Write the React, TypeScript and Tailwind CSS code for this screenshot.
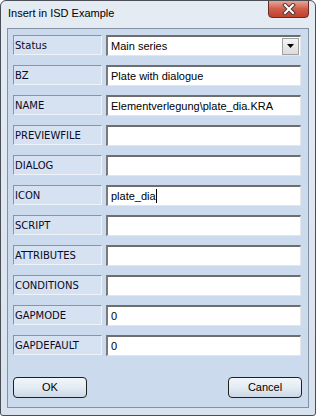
import React from 'react';

const rows: { label: string; value: string; caret?: boolean }[] = [
  { label: 'BZ', value: 'Plate with dialogue' },
  { label: 'NAME', value: 'Elementverlegung\\plate_dia.KRA' },
  { label: 'PREVIEWFILE', value: '' },
  { label: 'DIALOG', value: '' },
  { label: 'ICON', value: 'plate_dia', caret: true },
  { label: 'SCRIPT', value: '' },
  { label: 'ATTRIBUTES', value: '' },
  { label: 'CONDITIONS', value: '' },
  { label: 'GAPMODE', value: '0' },
  { label: 'GAPDEFAULT', value: '0' },
];

function Label({ text }: { text: string }) {
  return (
    <div className="w-[89px] h-[20px] shrink-0 flex items-center pl-[1px] bg-[#d6e2f1] border-t border-l border-t-[#8e949c] border-l-[#8e949c] border-r border-b border-r-[#eef3f9] border-b-[#eef3f9] font-['DejaVu_Sans',sans-serif] text-[10px] text-[#0a0a28]">
      {text}
    </div>
  );
}

function Field({ value, caret }: { value: string; caret?: boolean }) {
  return (
    <div className="w-[195px] h-[21px] ml-[4px] flex items-center bg-white border-t-2 border-l-2 border-t-[#6e6e6e] border-l-[#7a7a7a] border-r border-b border-r-[#e6e6e6] border-b-[#e6e6e6] pl-[3px] font-['Liberation_Sans',sans-serif] text-[11px] text-black">
      {value}
      {caret && <span className="w-px h-[14px] bg-black" />}
    </div>
  );
}

function Button({ text }: { text: string }) {
  return (
    <button className="w-[74px] h-[21px] rounded-[4px] border border-[#1f1f1f] bg-gradient-to-b from-[#f3f6fa] via-[#e3ebf4] to-[#cdd8e6] font-['Liberation_Sans',sans-serif] text-[11px] text-black flex items-center justify-center">
      {text}
    </button>
  );
}

export default function App() {
  return (
    <div className="w-[316px] h-[416px] flex flex-col bg-gradient-to-b from-[#e4ebf3] to-[#d8e2ee] border border-[#4a4f57] rounded-t-[6px] rounded-b-[3px] overflow-hidden">
      {/* title bar */}
      <div className="h-[27px] shrink-0 flex items-start">
        <div className="flex-1 pl-[7px] pt-[7px] font-['Liberation_Sans',sans-serif] text-[11px] text-black leading-none">
          Insert in ISD Example
        </div>
        <div className="w-[41px] h-[18px] mr-[6px] mt-[-1px] rounded-b-[4px] border border-[#6b2b25] bg-gradient-to-b from-[#e8a596] via-[#cf5d4a] to-[#c0402d] flex items-center justify-center">
          <svg width="14" height="12" viewBox="0 0 14 12">
            <path d="M3 2 L11 10 M11 2 L3 10" stroke="#4a3a3a" strokeWidth="4" strokeLinecap="square" />
            <path d="M3 2 L11 10 M11 2 L3 10" stroke="#ffffff" strokeWidth="2" strokeLinecap="square" />
          </svg>
        </div>
      </div>

      {/* client area */}
      <div className="mx-[6px] mb-[7px] flex-1 flex flex-col border border-[#8391a3] bg-[#cbdaed] pt-[6px] pl-[5px] pr-[6px]">
        <div className="flex flex-col gap-[9px]">
          <div className="flex items-start">
            <Label text="Status" />
            <div className="w-[195px] h-[21px] ml-[4px] flex items-center justify-between bg-white border-t-2 border-l-2 border-t-[#6e6e6e] border-l-[#7a7a7a] border-r border-b border-r-[#e6e6e6] border-b-[#e6e6e6] pl-[3px] font-['Liberation_Sans',sans-serif] text-[11px] text-black">
              Main series
              <div className="w-[17px] h-[17px] mr-[1px] flex items-center justify-center bg-gradient-to-b from-[#f4f4f4] to-[#dcdcdc] border border-[#a0a0a0]">
                <svg width="7" height="4" viewBox="0 0 7 4">
                  <path d="M0 0 H7 L3.5 4 Z" fill="#000" />
                </svg>
              </div>
            </div>
          </div>
          {rows.map((r) => (
            <div key={r.label} className="flex items-start">
              <Label text={r.label} />
              <Field value={r.value} caret={r.caret} />
            </div>
          ))}
        </div>
        <div className="flex justify-between mt-[21px]">
          <Button text="OK" />
          <Button text="Cancel" />
        </div>
      </div>
    </div>
  );
}
